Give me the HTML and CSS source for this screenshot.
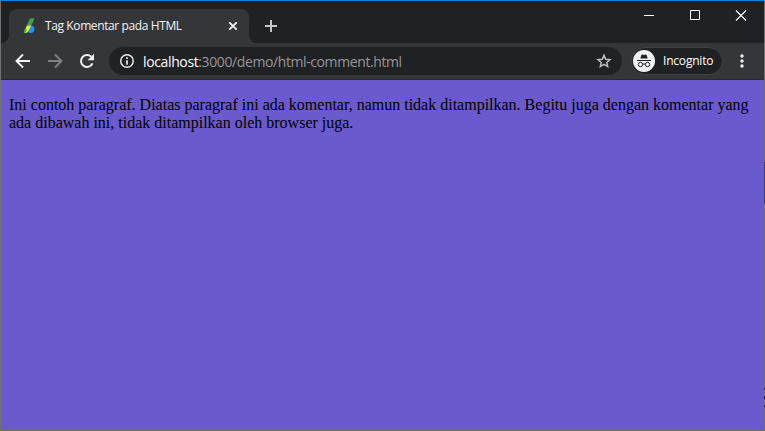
FILE: index.html
```html
<!DOCTYPE html>
<html lang="id">
<head>
<meta charset="utf-8">
<title>Tag Komentar pada HTML</title>
<link rel="stylesheet" href="styles.css">
</head>
<body>
<div class="window">
  <header class="tabstrip">
    <div class="tab">
      <svg class="favicon" width="16" height="16" viewBox="0 0 16 16"><path d="M7.500 1.600Q8.300.2 9.800.2h2q1 .4.300 1.600L6 14Q5 15.500 3 15H2.200q-.9-.6-.2-2z" fill="#43a047"/><circle cx="8.700" cy="11.300" r="3.700" fill="#2196f3"/><path d="M5 8.300Q6.500 7 9 7.700L6.600 12.600Q5.500 15 3 15q-1.800-.5-.7-2.200z" fill="#fdea35"/><path d="M2.500 11.600L4 9.300l.6 3.200L3 15q-1.800-.3-1-2.300z" fill="#43a047"/></svg>
      <span class="tab-title">Tag Komentar pada HTML</span>
      <svg class="tab-close" width="10" height="10" viewBox="0 0 10 10"><path d="M1.300 1.300l7.400 7.400M8.700 1.300L1.300 8.700" stroke="#f1f3f4" stroke-width="1.900"/></svg>
    </div>
    <svg class="new-tab" width="12" height="12" viewBox="0 0 12 12"><path d="M6 0v12M0 6h12" stroke="#c4c6c9" stroke-width="2"/></svg>
    <div class="controls">
      <svg width="46" height="30" viewBox="0 0 46 30"><path d="M18 14.500h10" stroke="#fff"/></svg>
      <svg width="46" height="30" viewBox="0 0 46 30"><path d="M18.500 9.500h9v9h-9z" fill="none" stroke="#fff"/></svg>
      <svg width="46" height="30" viewBox="0 0 46 30"><path d="M18 9.500l10 10M28 9.500l-10 10" stroke="#fff" stroke-width="1.100"/></svg>
    </div>
  </header>
  <nav class="toolbar">
    <svg class="nav" width="16" height="16" viewBox="0 0 16 16"><path d="M15 8H2.500M8 1.500L1.500 8 8 14.500" fill="none" stroke="#f1f3f4" stroke-width="1.900"/></svg>
    <svg class="nav" width="16" height="16" viewBox="0 0 16 16"><path d="M1 8h12.500M8 1.500L14.500 8 8 14.500" fill="none" stroke="#7f8184" stroke-width="1.900"/></svg>
    <svg class="nav" width="16" height="16" viewBox="0 0 16 16"><path d="M13.500 10.300A6 6 0 1 1 12.200 3.700" fill="none" stroke="#f1f3f4" stroke-width="2"/><path d="M15 .8v6.400H8.600z" fill="#f1f3f4"/></svg>
    <div class="omnibox">
      <svg width="16" height="16" viewBox="0 0 16 16"><circle cx="8" cy="8" r="6.250" fill="none" stroke="#e8eaed" stroke-width="1.500"/><path d="M8 4.300v1.600M8 7.200v4.500" stroke="#e8eaed" stroke-width="1.700"/></svg>
      <span class="url"><span class="host">localhost</span>:3000/demo/html-comment.html</span>
      <svg class="star" width="16" height="16" viewBox="0 0 16 16"><path d="M8 2.200l1.700 4 4.300.4-3.200 2.800.9 4.200L8 11.400l-3.700 2.200.9-4.200L2 6.600l4.300-.4z" fill="none" stroke="#bdbfc2" stroke-width="1.500"/></svg>
    </div>
    <div class="profile">
      <svg width="22" height="22" viewBox="0 0 22 22"><circle cx="11" cy="11" r="11" fill="#f1f3f4"/><path d="M7.300 8.500l1.100-3.500q.3-.7 1-.5l1.600.5 1.600-.5q.7-.2 1 .5l1.100 3.500z" fill="#202124"/><path d="M4 10.500h14" stroke="#202124"/><g fill="none" stroke="#202124"><circle cx="7.500" cy="14.500" r="2.200"/><circle cx="14.500" cy="14.500" r="2.200"/><path d="M9.700 14.300q1.300-.8 2.600 0"/></g></svg>
      <span class="profile-name">Incognito</span>
    </div>
    <svg class="menu" width="4" height="14" viewBox="0 0 4 14" fill="#f1f3f4"><circle cx="2" cy="2" r="1.700"/><circle cx="2" cy="7" r="1.700"/><circle cx="2" cy="12" r="1.700"/></svg>
  </nav>
  <main class="page">
    <p>Ini contoh paragraf. Diatas paragraf ini ada komentar, namun tidak ditampilkan. Begitu juga dengan komentar yang ada dibawah ini, tidak ditampilkan oleh browser juga.</p>
  </main>
</div>
<svg class="edge" width="1" height="270" viewBox="0 0 1 270"><path d="M0 0h1v42H0z" fill="#3c4858"/><path d="M0 226h1v2H0zM0 234h1v3H0zM0 243h1v2H0z" fill="#242044"/></svg>
</body>
</html>
```
FILE: styles.css
```css
* { box-sizing: border-box; }
body { margin: 0; overflow: hidden; background: #202124; }
svg { display: block; flex: none; }
.window {
  width: 765px;
  height: 431px;
  display: flex;
  flex-direction: column;
  border: 1px solid #707070;
  border-top-color: #1883d7;
  font-family: "Open Sans", "Noto Sans", sans-serif;
}
.tabstrip {
  height: 42px;
  flex: none;
  display: flex;
  align-items: flex-start;
  padding-left: 8px;
  background: #202124;
}
.tab {
  position: relative;
  width: 240px;
  height: 34px;
  margin-top: 8px;
  padding: 0 11px 0 13px;
  display: flex;
  align-items: center;
  border-radius: 8px 8px 0 0;
  background: #35363a;
}
.tab::before, .tab::after {
  content: "";
  position: absolute;
  bottom: 0;
  width: 8px;
  height: 8px;
}
.tab::before { left: -8px; background: radial-gradient(circle at 0 0, #202124 7.5px, #35363a 8.5px); }
.tab::after { right: -8px; background: radial-gradient(circle at 100% 0, #202124 7.5px, #35363a 8.5px); }
.tab-title {
  flex: 1;
  margin-left: 7px;
  padding-bottom: 1px;
  font-size: 12px;
  font-weight: 500;
  letter-spacing: -0.39px;
  white-space: nowrap;
  color: #f1f3f4;
}
.new-tab { margin: 19px 0 0 16px; }
.controls { display: flex; margin-left: auto; }
.toolbar {
  height: 37px;
  flex: none;
  display: flex;
  align-items: center;
  padding-left: 14px;
  border-bottom: 1px solid #28292c;
  background: #35363a;
}
.nav { margin-right: 16px; }
.omnibox {
  width: 513px;
  height: 28px;
  margin-left: -2px;
  padding: 0 10px;
  display: flex;
  align-items: center;
  border-radius: 14px;
  background: #202124;
}
.url {
  margin-left: 8px;
  font-size: 14px;
  letter-spacing: -0.4px;
  white-space: nowrap;
  color: #94979b;
}
.host { color: #fff; font-weight: 500; letter-spacing: -0.37px; }
.star { margin-left: auto; }
.profile {
  width: 92px;
  height: 28px;
  margin-left: 9px;
  padding-left: 1px;
  display: flex;
  align-items: center;
  border: 1px solid #3f4043;
  border-radius: 14px;
  background: #202124;
}
.profile-name {
  margin-left: 8px;
  padding-bottom: 1px;
  font-size: 12px;
  font-weight: 500;
  letter-spacing: -0.2px;
  color: #fff;
}
.menu { margin-left: 17px; }
.page {
  flex: 1;
  padding: 16px 8px;
  background: #6a5acd;
}
.page p {
  margin: 0;
  font: 16px/18px "Liberation Serif", serif;
  color: #000;
}
.edge { position: absolute; left: 764px; top: 162px; }
```
